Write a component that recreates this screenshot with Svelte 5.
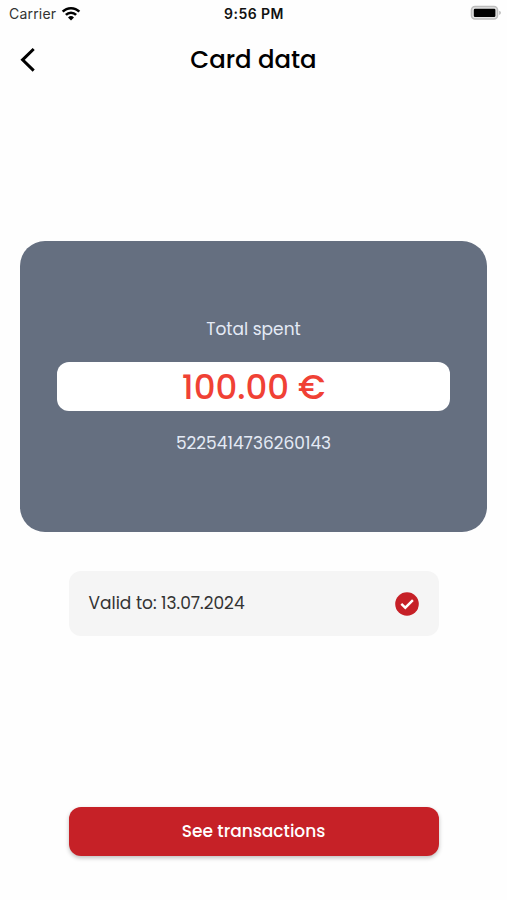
<script>
  // Card details (hardcoded for now)
  let card = {
    spent: 100,
    currency: '€',
    number: '5225414736260143',
    validTo: '13.07.2024',
    valid: true
  };

  let carrier = 'Carrier';
  let time = '9:56 PM';

  function goBack() {
    history.back();
  }
</script>

<div class="screen">
  <!-- Status bar -->
  <div class="status-bar">
    <div class="carrier">
      <span class="carrier-name">{carrier}</span>
      <svg class="wifi" viewBox="0 0 20 15" width="20" height="15">
        <path d="M1.7 5.7 A11.6 11.6 0 0 1 18.3 5.7" />
        <path d="M4.9 8.9 A7.2 7.2 0 0 1 15.1 8.9" />
        <path class="dot" d="M10 14.4 L7 11.4 A4.3 4.3 0 0 1 13 11.4 Z" />
      </svg>
    </div>
    <span class="time">{time}</span>
    <svg class="battery" viewBox="0 0 32 16" width="32" height="16">
      <rect x="1.5" y="1.5" width="26" height="12.5" rx="3.5" fill="#e4e4e4" stroke="#bdbdbd" stroke-width="1.6" />
      <rect x="3.8" y="3.8" width="21.6" height="8.2" rx="1.2" fill="#000" />
      <path d="M29.1 5.7 Q31 6.4 31 7.8 Q31 9.2 29.1 9.9 Z" fill="#bdbdbd" />
    </svg>
  </div>

  <!-- Header -->
  <header class="header">
    <button class="back" aria-label="Back" on:click={goBack}>
      <svg viewBox="0 0 18 26" width="18" height="26">
        <path d="M16.7 2 L5.6 12.8 L16.7 23.6" />
      </svg>
    </button>
    <h1>Card data</h1>
  </header>

  <main>
    <!-- Card -->
    <section class="card">
      <p class="label">Total spent</p>
      <div class="amount"><span>{card.spent.toFixed(2)} {card.currency}</span></div>
      <p class="number">{card.number}</p>
    </section>

    <!-- Validity -->
    <div class="validity">
      <span>Valid to: {card.validTo}</span>
      {#if card.valid}
        <svg viewBox="0 0 24 24" width="24" height="24">
          <circle cx="12" cy="12" r="11.8" fill="#c62027" />
          <path d="M6.3 11.8 L10.3 15.7 L17.9 8.2" />
        </svg>
      {/if}
    </div>

    <button class="transactions">See transactions</button>
  </main>
</div>

<style>
  :global(body) {
    margin: 0;
    background: #fefefe;
  }

  .screen {
    display: flex;
    flex-direction: column;
    height: 900px;
    font-family: 'Poppins', 'Inter', sans-serif;
    background: #fefefe;
    color: #000;
  }

  .status-bar {
    display: grid;
    grid-template-columns: 1fr auto 1fr;
    align-items: center;
    height: 26px;
    padding: 0 5px 1px 9px;
    font-family: 'Inter', sans-serif;
    font-size: 14px;
  }

  .carrier {
    display: flex;
    align-items: center;
    gap: 5px;
  }

  .carrier-name {
    color: #333;
    letter-spacing: 0.2px;
  }

  .wifi path {
    fill: none;
    stroke: #000;
    stroke-width: 2.6;
  }

  .wifi .dot {
    fill: #000;
    stroke: none;
  }

  .time {
    margin-right: 3px;
    font-weight: 600;
    color: #111;
    letter-spacing: 0.45px;
  }

  .battery {
    justify-self: end;
  }

  .header {
    display: grid;
    grid-template-columns: 1fr auto 1fr;
    align-items: center;
    height: 65px;
    padding: 0 17px;
  }

  .back {
    display: flex;
    justify-self: start;
    padding: 0;
    border: none;
    background: none;
    cursor: pointer;
  }

  .back path {
    fill: none;
    stroke: #000;
    stroke-width: 3;
  }

  h1 {
    margin: 0;
    font-size: 24.4px;
    font-weight: 500;
    line-height: 36px;
  }

  main {
    display: flex;
    flex-direction: column;
    align-items: center;
    padding-top: 148.5px;
  }

  .card {
    display: flex;
    flex-direction: column;
    align-items: center;
    justify-content: center;
    box-sizing: border-box;
    width: 467px;
    height: 291.5px;
    padding: 0 37px;
    border-radius: 25px;
    background: #656f80;
    color: #e4eaf5;
  }

  .card p {
    margin: 0;
    font-size: 17px;
    line-height: 24px;
  }

  .card .label {
    margin-top: -1px;
    padding-bottom: 1px;
  }

  .amount {
    display: flex;
    align-items: center;
    justify-content: center;
    width: 100%;
    height: 49px;
    margin: 20px 0;
    border-radius: 12px;
    background: #fff;
    color: #f04135;
    font-size: 34px;
    font-weight: 500;
  }

  .amount span {
    padding-top: 2px;
  }

  .validity {
    display: flex;
    align-items: center;
    justify-content: space-between;
    box-sizing: border-box;
    width: 370px;
    height: 65px;
    margin-top: 39px;
    padding: 0 20px;
    border-radius: 12px;
    background: #f5f5f5;
    color: #333;
    font-size: 17px;
  }

  .validity span {
    padding-bottom: 2px;
  }

  .validity path {
    fill: none;
    stroke: #fff;
    stroke-width: 2.4;
  }

  .transactions {
    width: 370px;
    height: 49px;
    margin-top: 171px;
    padding: 0 0 2px;
    border: none;
    border-radius: 12px;
    background: #c62127;
    color: #fff;
    font-family: inherit;
    font-size: 17px;
    font-weight: 500;
    box-shadow: 0 2px 4px rgba(0, 0, 0, 0.25);
    cursor: pointer;
  }
</style>
